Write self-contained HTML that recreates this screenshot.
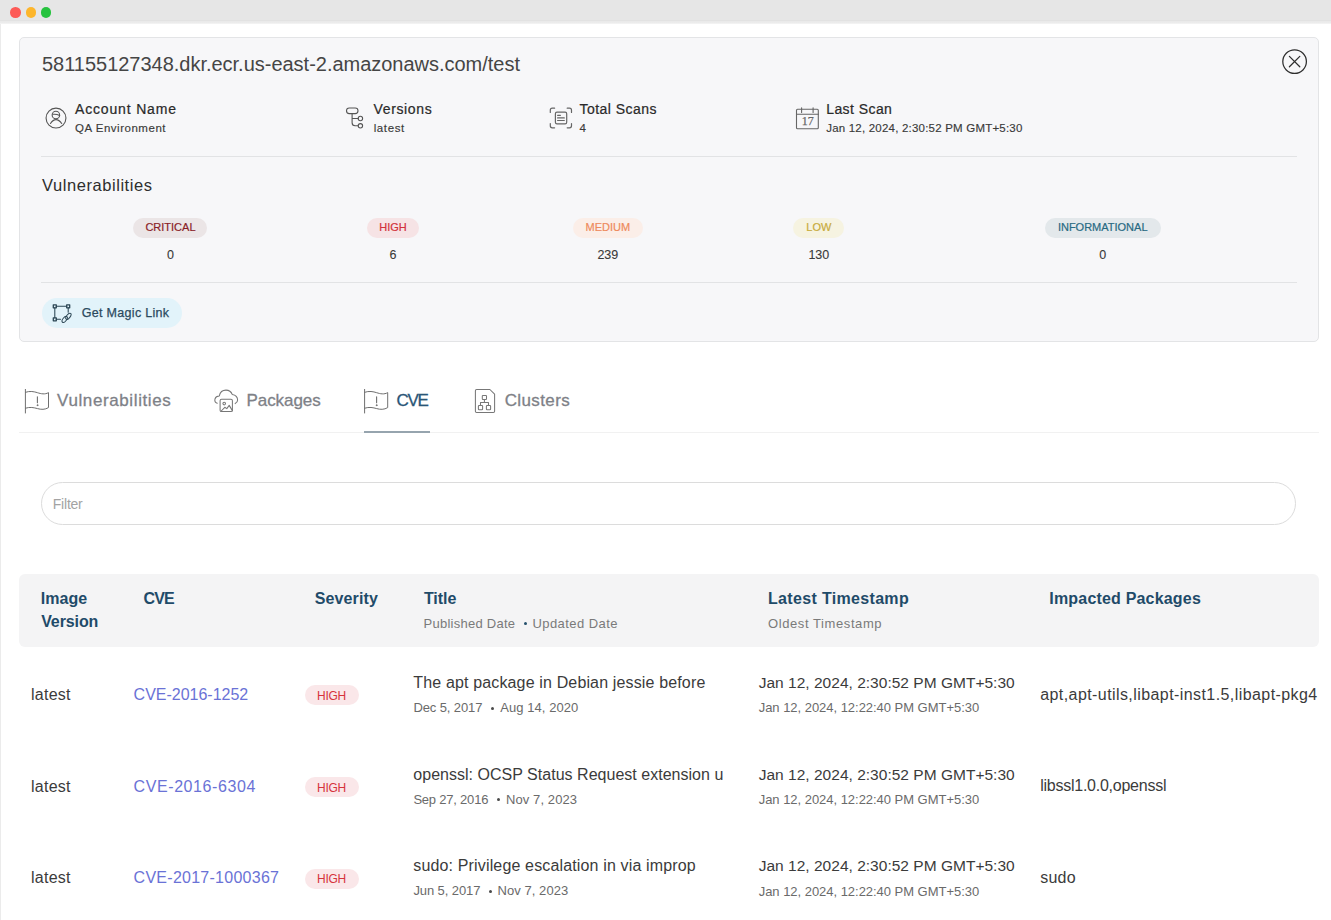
<!DOCTYPE html>
<html><head><meta charset="utf-8">
<style>
*{margin:0;padding:0;box-sizing:border-box}
html,body{width:1331px;height:920px;overflow:hidden;background:#fff;font-family:"Liberation Sans",sans-serif;position:relative}
.a{position:absolute;white-space:pre;line-height:1}
#topbar{position:absolute;left:0;top:0;width:1331px;height:23px;background:linear-gradient(#e6e6e6 0,#e6e6e6 20px,#e2e2e2 20px,#e2e2e2 21px,#e9e9e9 21px,#ececec 23px)}
#topbar2{position:absolute;left:0;top:23px;width:1331px;height:1px;background:#f2f2f2}
#lborder{position:absolute;left:0;top:24px;width:1px;height:896px;background:#ebebeb}
.dot{position:absolute;top:7px;width:10.5px;height:10.5px;border-radius:50%}
#card{position:absolute;left:19px;top:37px;width:1300px;height:305px;background:#f7f7f9;border:1px solid #e3e4e6;border-radius:5px}
.hr{position:absolute;height:1px;background:#e2e3e5}
.pill{position:absolute;height:20px;border-radius:10px}
svg{position:absolute;overflow:visible}
</style></head><body>
<div id="topbar"></div><div id="topbar2"></div><div id="lborder"></div>
<div class="dot" style="left:10.3px;background:#fd5b57"></div>
<div class="dot" style="left:25.5px;background:#fdb62c"></div>
<div class="dot" style="left:40.8px;background:#27c33f"></div>

<div id="card"></div>
<div class="hr" style="left:41px;top:156px;width:1256px"></div>
<div class="hr" style="left:41px;top:282px;width:1256px"></div>
<div style="position:absolute;left:41.5px;top:297.5px;width:140px;height:30.5px;border-radius:15.25px;background:#e2f3fa"></div>

<!-- tabs -->
<div style="position:absolute;left:19px;top:432px;width:1300px;height:1px;background:#f1f1f1"></div>
<div style="position:absolute;left:364.4px;top:431px;width:65.5px;height:2px;background:#96a4ae"></div>

<!-- filter -->
<div style="position:absolute;left:41px;top:482px;width:1255px;height:43px;border-radius:21.5px;border:1px solid #dcdcdc;background:#fff"></div>

<!-- table header -->
<div style="position:absolute;left:19px;top:574px;width:1300px;height:73px;border-radius:6px;background:#f4f4f5"></div>

<div class="pill" style="left:133.4px;top:218px;width:74.1px;background:#ebe5e6"></div>
<div class="pill" style="left:367.0px;top:218px;width:52.1px;background:#f6e3e5"></div>
<div class="pill" style="left:573.1px;top:218px;width:69.5px;background:#fbeee8"></div>
<div class="pill" style="left:793.3px;top:218px;width:51.1px;background:#f6f3e1"></div>
<div class="pill" style="left:1044.7px;top:218px;width:116.0px;background:#e3e8eb"></div>
<div class="pill" style="left:304.5px;top:685.4px;width:54.2px;background:#fae7e9"></div>
<div class="pill" style="left:304.5px;top:777.0px;width:54.2px;background:#fae7e9"></div>
<div class="pill" style="left:304.5px;top:868.5px;width:54.2px;background:#fae7e9"></div>
<div style="position:absolute;left:523.70px;top:622.20px;width:3.2px;height:3.2px;border-radius:50%;background:#24506c"></div>
<div style="position:absolute;left:490.50px;top:706.60px;width:3.2px;height:3.2px;border-radius:50%;background:#4a4a4a"></div>
<div style="position:absolute;left:497.00px;top:798.20px;width:3.2px;height:3.2px;border-radius:50%;background:#4a4a4a"></div>
<div style="position:absolute;left:488.60px;top:889.70px;width:3.2px;height:3.2px;border-radius:50%;background:#4a4a4a"></div>

<svg style="left:0;top:0" width="1331" height="920" viewBox="0 0 1331 920" fill="none" stroke-linecap="round" stroke-linejoin="round">
<!-- close -->
<g stroke="#2e2e2e" stroke-width="1.25">
<circle cx="1294.6" cy="61.6" r="11.8"/>
<path d="M1289.4 56.4L1299.8 66.8M1299.8 56.4L1289.4 66.8"/>
</g>
<!-- account -->
<g stroke="#555" stroke-width="1.1">
<circle cx="56" cy="118.1" r="9.95"/>
<circle cx="55.9" cy="115.05" r="3.75"/>
<path d="M52.8 114.3Q56.5 113.8 59.6 115.6"/>
<path d="M50.5 123.5Q53 119.6 56 119.6Q59 119.6 61.7 123.5"/>
</g>
<!-- versions -->
<g stroke="#555" stroke-width="1.1">
<rect x="346.5" y="108" width="11.5" height="5.6" rx="2.8"/>
<path d="M352.1 113.6V122.8Q352.1 125.8 355.1 125.8H358.2M352.1 118.5H358.2"/>
<circle cx="360.4" cy="118.5" r="2.2"/>
<circle cx="360.4" cy="125.8" r="2.2"/>
</g>
<!-- total scans -->
<g stroke="#666" stroke-width="1.2">
<path d="M550.3 112.5V110.2Q550.3 108.2 552.3 108.2H554.6M567.2 108.2H569.5Q571.5 108.2 571.5 110.2V112.5M571.5 123.5V125.8Q571.5 127.8 569.5 127.8H567.2M554.6 127.8H552.3Q550.3 127.8 550.3 125.8V123.5"/>
<rect x="555.4" y="112.1" width="11.3" height="11.8" rx="1.6"/>
<path d="M557.6 115.3H560.4M557.6 117.9H564.3M557.6 120.5H564.3"/>
</g>
<!-- calendar -->
<g stroke="#666" stroke-width="1.1">
<rect x="796.5" y="109.2" width="21.8" height="19.5" rx="1"/>
<path d="M796.5 114.3H818.3M801.6 107.8V112.5M813.1 107.8V112.5"/>
</g>
<text x="807.7" y="124.9" font-family="Liberation Serif" font-size="12" fill="#666" stroke="#666" stroke-width="0.25" text-anchor="middle">17</text>
<!-- magic link -->
<g stroke="#2b4654" stroke-width="1.3">
<rect x="53.3" y="304.8" width="3" height="3"/>
<rect x="66.7" y="304.8" width="3" height="3"/>
<rect x="53.3" y="317.8" width="3" height="3"/>
<path d="M56.3 306.2H66.7M54.8 307.8V317.8M68.2 307.8V312.3M56.3 319.2H60.5" stroke-width="1.05"/>
<ellipse cx="64.7" cy="319.4" rx="3.6" ry="1.8" transform="rotate(-52 64.7 319.4)" stroke-width="1"/>
<ellipse cx="68.4" cy="316.3" rx="3.6" ry="1.8" transform="rotate(-52 68.4 316.3)" stroke-width="1"/>
</g>
<!-- tab flags -->
<g stroke="#6f6f6f" stroke-width="1">
<path d="M25.4 389.4V413"/>
<path d="M25.4 392.3C30 390.7 34 391.6 37.5 392.7S45 394.7 48.5 392.6V407.6C45 409.8 41 409.6 37.5 408.6S30 406.7 25.4 408.2"/>
<path d="M37.4 396.8V402.8" stroke-width="1.1"/>
<circle cx="37.4" cy="405.2" r="0.45" fill="#6f6f6f"/>
</g>
<g stroke="#6f6f6f" stroke-width="1" transform="translate(339.2 0)">
<path d="M25.4 389.4V413"/>
<path d="M25.4 392.3C30 390.7 34 391.6 37.5 392.7S45 394.7 48.5 392.6V407.6C45 409.8 41 409.6 37.5 408.6S30 406.7 25.4 408.2"/>
<path d="M37.4 396.8V402.8" stroke-width="1.1"/>
<circle cx="37.4" cy="405.2" r="0.45" fill="#6f6f6f"/>
</g>
<!-- packages cloud -->
<g stroke="#777" stroke-width="1.05">
<path d="M217.2 403.3C215.2 402.5 214.6 400.4 215 398.8C215.6 396.8 217.3 395.9 219.3 395.9C220 392.4 222.6 390.1 226 390.1C229 390.1 231.3 392 232.2 394.4C235.5 394.9 237.6 397.4 237.6 400.1C237.6 401.8 236.6 403 235.2 403.6"/>
<rect x="220.1" y="399.3" width="12.3" height="12.3" rx="1.4"/>
<circle cx="224.2" cy="403.6" r="1.3"/>
<path d="M221.2 411L224.8 407.3L226.8 408.6L229.2 405.4L232.4 410.6"/>
</g>
<!-- clusters -->
<g stroke="#777" stroke-width="1.05">
<path d="M476.6 389.5H489.9L494.6 394.2V411.3Q494.6 412.5 493.4 412.5H476.6Q475.4 412.5 475.4 411.3V390.7Q475.4 389.5 476.6 389.5Z"/>
<rect x="482.3" y="395.4" width="4.2" height="4.1" rx="0.7"/>
<rect x="478.4" y="405.5" width="4.2" height="4.2" rx="0.7"/>
<rect x="486.4" y="405.5" width="4.2" height="4.2" rx="0.7"/>
<path d="M484.4 399.5V402.5M480.5 405.5V402.5H488.5V405.5"/>
</g>
</svg>

<div class="a" style="left:42.00px;top:54.07px;font-size:20px;color:#454545;letter-spacing:-0.017px">581155127348.dkr.ecr.us-east-2.amazonaws.com/test</div>
<div class="a" style="left:75.00px;top:101.65px;font-size:14px;color:#2a2a2a;letter-spacing:0.834px;-webkit-text-stroke:0.22px #2a2a2a">Account Name</div>
<div class="a" style="left:75.00px;top:122.67px;font-size:11.5px;color:#3a3a3a;letter-spacing:0.520px;-webkit-text-stroke:0.15px #3a3a3a">QA Environment</div>
<div class="a" style="left:373.50px;top:101.65px;font-size:14px;color:#2a2a2a;letter-spacing:0.642px;-webkit-text-stroke:0.22px #2a2a2a">Versions</div>
<div class="a" style="left:373.70px;top:122.67px;font-size:11.5px;color:#3a3a3a;letter-spacing:0.600px;-webkit-text-stroke:0.15px #3a3a3a">latest</div>
<div class="a" style="left:579.50px;top:101.65px;font-size:14px;color:#2a2a2a;letter-spacing:0.472px;-webkit-text-stroke:0.22px #2a2a2a">Total Scans</div>
<div class="a" style="left:579.50px;top:122.67px;font-size:11.5px;color:#3a3a3a;-webkit-text-stroke:0.15px #3a3a3a">4</div>
<div class="a" style="left:826.20px;top:101.65px;font-size:14px;color:#2a2a2a;letter-spacing:0.429px;-webkit-text-stroke:0.22px #2a2a2a">Last Scan</div>
<div class="a" style="left:826.20px;top:122.67px;font-size:11.5px;color:#3a3a3a;letter-spacing:0.207px;-webkit-text-stroke:0.15px #3a3a3a">Jan 12, 2024, 2:30:52 PM GMT+5:30</div>
<div class="a" style="left:42.00px;top:176.53px;font-size:16.5px;color:#2e2e2e;letter-spacing:0.562px">Vulnerabilities</div>
<div class="a" style="left:145.39px;top:221.79px;font-size:11px;color:#8a1d26;-webkit-text-stroke:0.2px #8a1d26">CRITICAL</div>
<div class="a" style="left:166.97px;top:248.52px;font-size:12.5px;color:#3a3a3a;-webkit-text-stroke:0.1px #3a3a3a">0</div>
<div class="a" style="left:379.30px;top:221.79px;font-size:11px;color:#d3323b;-webkit-text-stroke:0.2px #d3323b">HIGH</div>
<div class="a" style="left:389.57px;top:248.52px;font-size:12.5px;color:#3a3a3a;-webkit-text-stroke:0.1px #3a3a3a">6</div>
<div class="a" style="left:585.55px;top:221.79px;font-size:11px;color:#ee8a5c;-webkit-text-stroke:0.2px #ee8a5c">MEDIUM</div>
<div class="a" style="left:597.42px;top:248.52px;font-size:12.5px;color:#3a3a3a;-webkit-text-stroke:0.1px #3a3a3a">239</div>
<div class="a" style="left:806.32px;top:221.79px;font-size:11px;color:#c8ab3c;-webkit-text-stroke:0.2px #c8ab3c">LOW</div>
<div class="a" style="left:808.42px;top:248.52px;font-size:12.5px;color:#3a3a3a;-webkit-text-stroke:0.1px #3a3a3a">130</div>
<div class="a" style="left:1057.88px;top:221.79px;font-size:11px;color:#286a83;-webkit-text-stroke:0.2px #286a83">INFORMATIONAL</div>
<div class="a" style="left:1099.22px;top:248.52px;font-size:12.5px;color:#3a3a3a;-webkit-text-stroke:0.1px #3a3a3a">0</div>
<div class="a" style="left:81.70px;top:306.62px;font-size:12.5px;color:#2b4a5e;letter-spacing:0.310px;-webkit-text-stroke:0.25px #2b4a5e">Get Magic Link</div>
<div class="a" style="left:57.10px;top:392.11px;font-size:17px;color:#7e8187;letter-spacing:0.606px;-webkit-text-stroke:0.3px #7e8187">Vulnerabilities</div>
<div class="a" style="left:246.50px;top:392.11px;font-size:17px;color:#7e8187;letter-spacing:-0.067px;-webkit-text-stroke:0.3px #7e8187">Packages</div>
<div class="a" style="left:396.50px;top:392.11px;font-size:17px;color:#2a5677;letter-spacing:-1.284px;-webkit-text-stroke:0.3px #2a5677">CVE</div>
<div class="a" style="left:504.70px;top:392.11px;font-size:17px;color:#7e8187;letter-spacing:0.377px;-webkit-text-stroke:0.3px #7e8187">Clusters</div>
<div class="a" style="left:52.80px;top:497.35px;font-size:14px;color:#a3a3a3;letter-spacing:-0.225px">Filter</div>
<div class="a" style="left:40.80px;top:590.66px;font-size:16px;color:#1f4b69;font-weight:700;letter-spacing:0.012px">Image</div>
<div class="a" style="left:41.20px;top:614.36px;font-size:16px;color:#1f4b69;font-weight:700;letter-spacing:-0.102px">Version</div>
<div class="a" style="left:143.60px;top:590.66px;font-size:16px;color:#1f4b69;font-weight:700;letter-spacing:-0.903px">CVE</div>
<div class="a" style="left:314.80px;top:590.66px;font-size:16px;color:#1f4b69;font-weight:700;letter-spacing:0.105px">Severity</div>
<div class="a" style="left:423.90px;top:590.66px;font-size:16px;color:#1f4b69;font-weight:700;letter-spacing:-0.052px">Title</div>
<div class="a" style="left:423.50px;top:617.00px;font-size:13px;color:#7a7a7a;letter-spacing:0.256px">Published Date</div>
<div class="a" style="left:532.40px;top:617.00px;font-size:13px;color:#7a7a7a;letter-spacing:0.451px">Updated Date</div>
<div class="a" style="left:768.00px;top:590.66px;font-size:16px;color:#1f4b69;font-weight:700;letter-spacing:0.330px">Latest Timestamp</div>
<div class="a" style="left:768.00px;top:617.00px;font-size:13px;color:#7a7a7a;letter-spacing:0.589px">Oldest Timestamp</div>
<div class="a" style="left:1049.30px;top:590.66px;font-size:16px;color:#1f4b69;font-weight:700;letter-spacing:0.186px">Impacted Packages</div>
<div class="a" style="left:31.00px;top:686.96px;font-size:16px;color:#3b3b3b;letter-spacing:0.250px">latest</div>
<div class="a" style="left:133.60px;top:686.96px;font-size:16px;color:#6a72d6;letter-spacing:-0.013px">CVE-2016-1252</div>
<div class="a" style="left:317.10px;top:689.94px;font-size:12px;color:#d6343c;letter-spacing:-0.333px">HIGH</div>
<div class="a" style="left:413.30px;top:674.96px;font-size:16px;color:#3b3b3b;letter-spacing:0.147px">The apt package in Debian jessie before</div>
<div class="a" style="left:413.40px;top:701.20px;font-size:13px;color:#6a6a6a;letter-spacing:-0.111px">Dec 5, 2017</div>
<div class="a" style="left:500.30px;top:701.20px;font-size:13px;color:#6a6a6a;letter-spacing:0.058px">Aug 14, 2020</div>
<div class="a" style="left:758.70px;top:675.38px;font-size:15.5px;color:#3b3b3b;letter-spacing:0.016px">Jan 12, 2024, 2:30:52 PM GMT+5:30</div>
<div class="a" style="left:758.70px;top:701.40px;font-size:13px;color:#6a6a6a;letter-spacing:-0.031px">Jan 12, 2024, 12:22:40 PM GMT+5:30</div>
<div class="a" style="left:1040.20px;top:686.66px;font-size:16px;color:#3b3b3b;letter-spacing:0.421px">apt,apt-utils,libapt-inst1.5,libapt-pkg4</div>
<div class="a" style="left:31.00px;top:778.56px;font-size:16px;color:#3b3b3b;letter-spacing:0.250px">latest</div>
<div class="a" style="left:133.60px;top:778.56px;font-size:16px;color:#6a72d6;letter-spacing:0.579px">CVE-2016-6304</div>
<div class="a" style="left:317.10px;top:781.54px;font-size:12px;color:#d6343c;letter-spacing:-0.333px">HIGH</div>
<div class="a" style="left:413.30px;top:766.56px;font-size:16px;color:#3b3b3b;letter-spacing:0.020px">openssl: OCSP Status Request extension u</div>
<div class="a" style="left:413.40px;top:792.80px;font-size:13px;color:#6a6a6a;letter-spacing:-0.214px">Sep 27, 2016</div>
<div class="a" style="left:506.00px;top:792.80px;font-size:13px;color:#6a6a6a;letter-spacing:0.089px">Nov 7, 2023</div>
<div class="a" style="left:758.70px;top:766.98px;font-size:15.5px;color:#3b3b3b;letter-spacing:0.016px">Jan 12, 2024, 2:30:52 PM GMT+5:30</div>
<div class="a" style="left:758.70px;top:793.00px;font-size:13px;color:#6a6a6a;letter-spacing:-0.031px">Jan 12, 2024, 12:22:40 PM GMT+5:30</div>
<div class="a" style="left:1040.20px;top:778.26px;font-size:16px;color:#3b3b3b;letter-spacing:-0.247px">libssl1.0.0,openssl</div>
<div class="a" style="left:31.00px;top:870.06px;font-size:16px;color:#3b3b3b;letter-spacing:0.250px">latest</div>
<div class="a" style="left:133.60px;top:870.06px;font-size:16px;color:#6a72d6;letter-spacing:0.264px">CVE-2017-1000367</div>
<div class="a" style="left:317.10px;top:873.04px;font-size:12px;color:#d6343c;letter-spacing:-0.333px">HIGH</div>
<div class="a" style="left:413.30px;top:858.06px;font-size:16px;color:#3b3b3b;letter-spacing:0.151px">sudo: Privilege escalation in via improp</div>
<div class="a" style="left:413.40px;top:884.30px;font-size:13px;color:#6a6a6a;letter-spacing:-0.095px">Jun 5, 2017</div>
<div class="a" style="left:497.60px;top:884.30px;font-size:13px;color:#6a6a6a;letter-spacing:0.049px">Nov 7, 2023</div>
<div class="a" style="left:758.70px;top:858.48px;font-size:15.5px;color:#3b3b3b;letter-spacing:0.016px">Jan 12, 2024, 2:30:52 PM GMT+5:30</div>
<div class="a" style="left:758.70px;top:884.50px;font-size:13px;color:#6a6a6a;letter-spacing:-0.031px">Jan 12, 2024, 12:22:40 PM GMT+5:30</div>
<div class="a" style="left:1040.20px;top:869.76px;font-size:16px;color:#3b3b3b;letter-spacing:0.266px">sudo</div>

</body></html>
